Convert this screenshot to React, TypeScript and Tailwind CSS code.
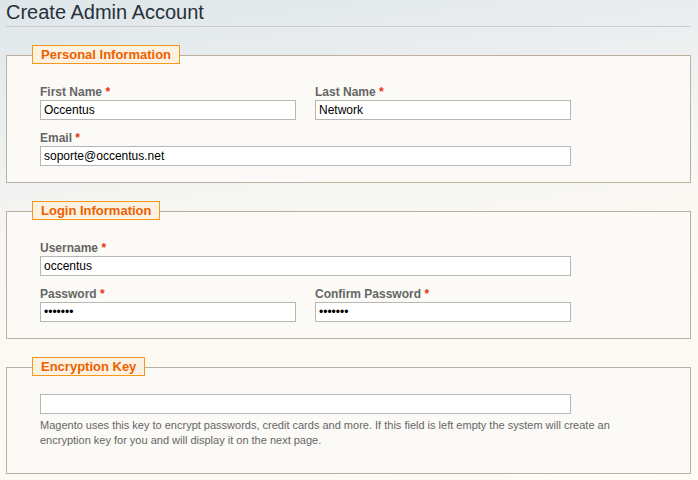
import React from "react";

const font = { fontFamily: '"Liberation Sans", Arial, sans-serif' };

function Label({ text }: { text: string }) {
  return (
    <label className="block h-[16px] text-[12px] leading-[16px] font-bold text-[#666666]">
      {text} <span className="text-[#eb340a]">*</span>
    </label>
  );
}

function Input({ value, type = "text", wide = false }: { value: string; type?: string; wide?: boolean }) {
  return (
    <input
      type={type}
      readOnly
      defaultValue={value}
      className={`block h-[20px] ${wide ? "w-[531px]" : "w-[256px]"} border border-[#b6b6b6] bg-white pl-[3px] text-[12px] leading-[18px] text-black outline-none`}
      style={font}
    />
  );
}

function Field({ label, value, type, wide }: { label: string; value: string; type?: string; wide?: boolean }) {
  return (
    <div className="flex flex-col">
      <Label text={label} />
      <Input value={value} type={type} wide={wide} />
    </div>
  );
}

function Fieldset({ legend, children, pt = "pt-[27px]" }: { legend: string; children: React.ReactNode; pt?: string }) {
  return (
    <div className={`relative border border-[#bbafa0] bg-[#fbfaf6] pl-[33px] ${pt}`}>
      <div className="absolute left-[25px] top-[-11px] h-[19px] border border-[#f39a1c] bg-[#fdf1e2] px-[8px] text-[13px] font-bold leading-[17px] text-[#eb6100] whitespace-nowrap">
        {legend}
      </div>
      {children}
    </div>
  );
}

export default function App() {
  return (
    <div
      className="min-h-[480px] w-[698px] bg-[linear-gradient(172deg,#dfe6e9_0%,#e9edee_18%,#f6f6f3_40%,#fcf9f2_60%,#fefbf4_100%)] pl-[6px] text-black"
      style={font}
    >
      <div className="w-[685px]">
        <h1 className="border-b border-[#c9cdcd] pb-[2px] text-[20px] leading-[24px] font-normal text-[#25323b]">
          Create Admin Account
        </h1>

        <div className="mt-[28px] flex flex-col gap-[28px]">
          <Fieldset legend="Personal Information" pt="pt-[28px]">
            <div className="flex flex-col gap-[10px] pb-[16px]">
              <div className="flex gap-[19px]">
                <Field label="First Name" value="Occentus" />
                <Field label="Last Name" value="Network" />
              </div>
              <Field label="Email" value="soporte@occentus.net" wide />
            </div>
          </Fieldset>

          <Fieldset legend="Login Information" pt="pt-[28px]">
            <div className="flex flex-col gap-[10px] pb-[16px]">
              <Field label="Username" value="occentus" wide />
              <div className="flex gap-[19px]">
                <Field label="Password" value="1234567" type="password" />
                <Field label="Confirm Password" value="1234567" type="password" />
              </div>
            </div>
          </Fieldset>

          <Fieldset legend="Encryption Key" pt="pt-[26px]">
            <div className="pb-[25px]">
              <Input value="" wide />
              <p className="mt-[4px] w-[600px] text-[11px] leading-[15px] text-[#666666]">
                Magento uses this key to encrypt passwords, credit cards and more. If this field is left empty the system will create an encryption key for you and will display it on the next page.
              </p>
            </div>
          </Fieldset>
        </div>
      </div>
    </div>
  );
}
